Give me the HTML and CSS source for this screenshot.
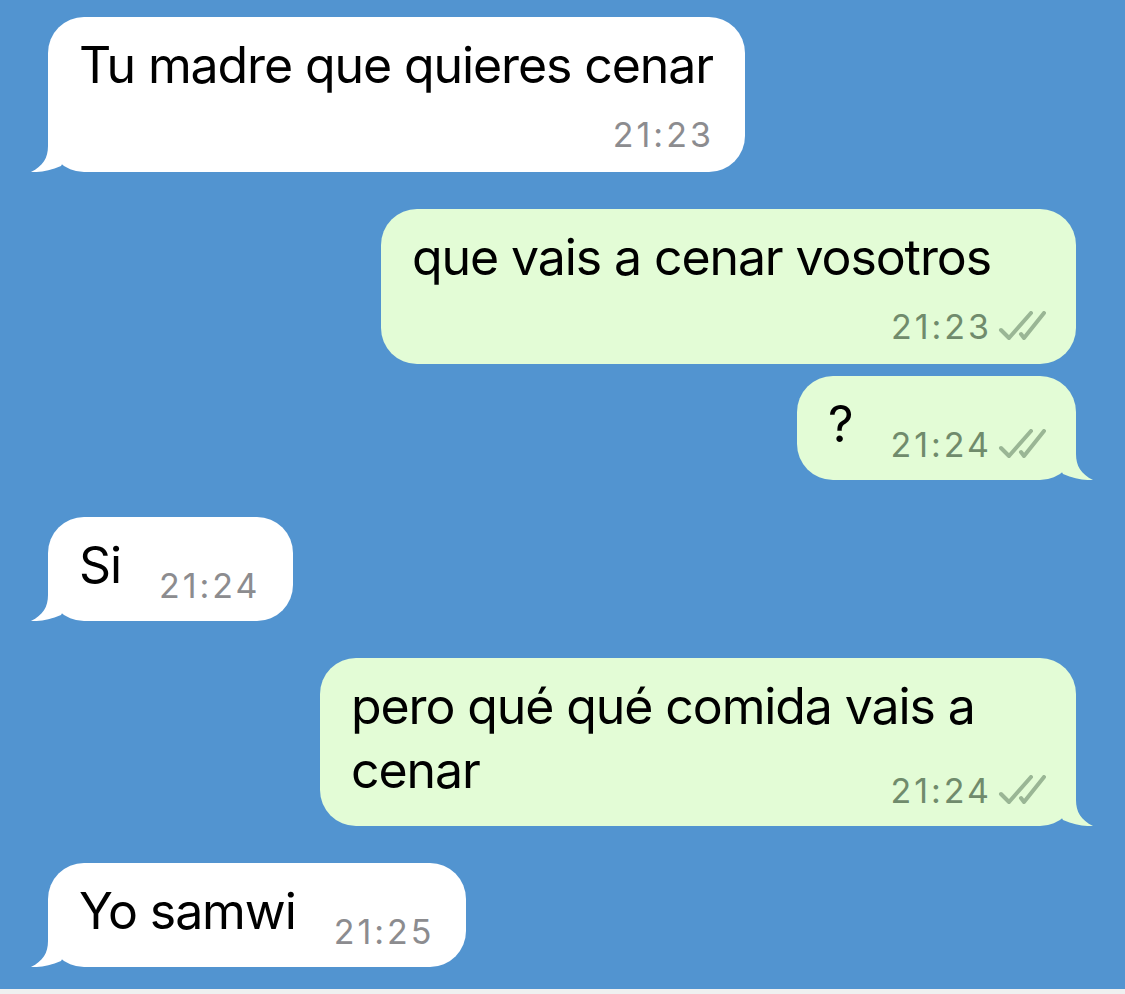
FILE: index.html
```html
<!DOCTYPE html>
<html lang="es">
<head>
<meta charset="utf-8">
<title>Chat</title>
<link rel="stylesheet" href="styles.css">
</head>
<body>
<main class="chat">
  <div class="row row-in">
    <div class="bubble bubble-in">
      <div class="text">Tu madre que quieres cenar</div>
      <div class="meta meta-line"><span class="time">21:23</span></div>
      <svg class="tail tail-in" viewBox="0 0 42 46" width="42" height="46"><path d="M18,0 L18,20 C18,32 13,40 1,46 C10,46.5 20,44.5 31,40 L42,20 L42,0 Z"/></svg>
    </div>
  </div>

  <div class="row row-out">
    <div class="bubble bubble-out bubble-wide">
      <div class="text">que vais a cenar vosotros</div>
      <div class="meta meta-line"><span class="time">21:23</span><svg class="checks" viewBox="0 0 48 30" width="48" height="30"><path d="M3,19 L11,27 L33,2"/><path d="M23,23 L26,27 L46,2"/></svg></div>
    </div>
  </div>

  <div class="row row-out grouped">
    <div class="bubble bubble-out">
      <div class="text">?<span class="meta meta-float"><span class="time">21:24</span><svg class="checks" viewBox="0 0 48 30" width="48" height="30"><path d="M3,19 L11,27 L33,2"/><path d="M23,23 L26,27 L46,2"/></svg></span></div>
      <svg class="tail tail-out" viewBox="0 0 42 46" width="42" height="46"><path d="M18,0 L18,20 C18,32 13,40 1,46 C10,46.5 20,44.5 31,40 L42,20 L42,0 Z"/></svg>
    </div>
  </div>

  <div class="row row-in">
    <div class="bubble bubble-in">
      <div class="text">Si<span class="meta meta-float"><span class="time">21:24</span></span></div>
      <svg class="tail tail-in" viewBox="0 0 42 46" width="42" height="46"><path d="M18,0 L18,20 C18,32 13,40 1,46 C10,46.5 20,44.5 31,40 L42,20 L42,0 Z"/></svg>
    </div>
  </div>

  <div class="row row-out">
    <div class="bubble bubble-out">
      <div class="text">pero qué qué comida vais a cenar<span class="meta meta-float"><span class="time">21:24</span><svg class="checks" viewBox="0 0 48 30" width="48" height="30"><path d="M3,19 L11,27 L33,2"/><path d="M23,23 L26,27 L46,2"/></svg></span></div>
      <svg class="tail tail-out" viewBox="0 0 42 46" width="42" height="46"><path d="M18,0 L18,20 C18,32 13,40 1,46 C10,46.5 20,44.5 31,40 L42,20 L42,0 Z"/></svg>
    </div>
  </div>

  <div class="row row-in">
    <div class="bubble bubble-in">
      <div class="text">Yo samwi<span class="meta meta-float"><span class="time">21:25</span></span></div>
      <svg class="tail tail-in" viewBox="0 0 42 46" width="42" height="46"><path d="M18,0 L18,20 C18,32 13,40 1,46 C10,46.5 20,44.5 31,40 L42,20 L42,0 Z"/></svg>
    </div>
  </div>
</main>
<div class="input-edge"></div>
</body>
</html>
```

FILE: styles.css
```css
* {
  box-sizing: border-box;
}

html, body {
  margin: 0;
  padding: 0;
}

body {
  width: 1125px;
  height: 994px;
  overflow: hidden;
  background: #5294d0;
  font-family: "Inter", "Liberation Sans", sans-serif;
  color: #000;
}

.chat {
  height: 989px;
  padding: 17px 49px 0 48px;
  display: flex;
  flex-direction: column;
}

.row {
  display: flex;
  margin-top: 37px;
}

.row:first-child {
  margin-top: 0;
}

.row.grouped {
  margin-top: 12px;
}

.row-out {
  justify-content: flex-end;
}

.bubble {
  position: relative;
  display: flow-root;
  max-width: 756px;
  padding: 16px 32px 20px 31px;
  border-radius: 36px;
}

.bubble-wide {
  min-width: 695px;
}

.bubble-in {
  background: #ffffff;
}

.bubble-out {
  background: #e3fcd6;
}

.bubble-out .tail {
  fill: #e3fcd6;
}

.bubble-in .tail {
  fill: #ffffff;
}

.text {
  font-size: 50px;
  line-height: 64px;
  letter-spacing: -1.1px;
}

/* time + read receipt */
.meta {
  display: flex;
  align-items: center;
  font-size: 34px;
  line-height: 34px;
  letter-spacing: 0;
  white-space: nowrap;
}

.meta-line {
  justify-content: flex-end;
  margin-top: 21px;
  margin-right: -1px;
}

.meta-float {
  float: right;
  margin: 36px 0 -2px 38px;
}

.bubble-in .time {
  color: #8c8c8f;
}

.bubble-out .time {
  color: #708b6c;
}

.time {
  letter-spacing: 3px;
}

.checks {
  margin-left: 6px;
  margin-top: -2px;
  fill: none;
  stroke: #9ab695;
  stroke-width: 4;
  stroke-linecap: round;
  stroke-linejoin: round;
}

.bubble-out .meta {
  margin-right: -2px;
}

/* bubble tail drawn over the bottom corner */
.tail {
  position: absolute;
  bottom: 0;
}

.tail-in {
  left: -18px;
}

.tail-out {
  right: -18px;
  transform: scaleX(-1);
}

.input-edge {
  height: 5px;
  background: #eff0f0;
}
```
